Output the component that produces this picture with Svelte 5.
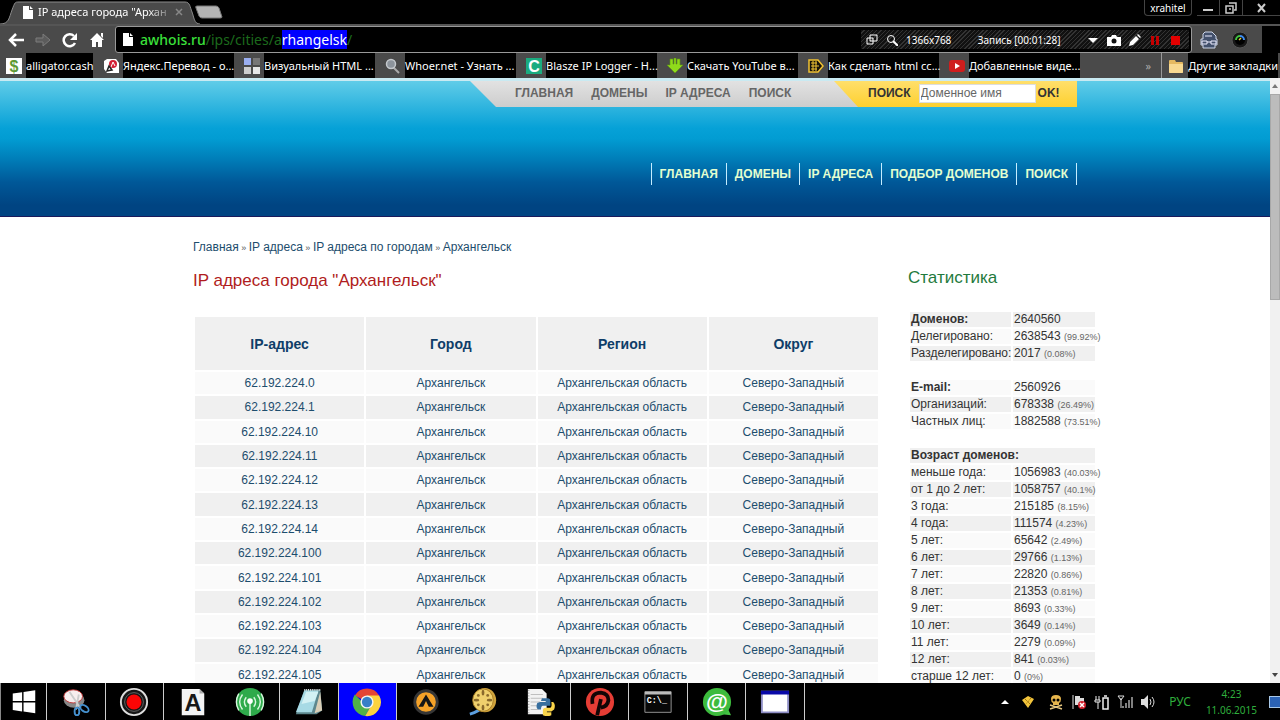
<script>
	let domain = $state('');

	const bookmarks = [
		{ icon: 'dollar', title: 'alligator.cash', short: true },
		{ icon: 'translate', title: 'Яндекс.Перевод - о...' },
		{ icon: 'grid', title: 'Визуальный HTML ...' },
		{ icon: 'lens', title: 'Whoer.net - Узнать ...' },
		{ icon: 'letter', title: 'Blasze IP Logger - H...' },
		{ icon: 'download', title: 'Скачать YouTube в...' },
		{ icon: 'tag', title: 'Как сделать html сс...' },
		{ icon: 'youtube', title: 'Добавленные виде...' }
	];

	const topLinks = ['ГЛАВНАЯ', 'ДОМЕНЫ', 'IP АДРЕСА', 'ПОИСК'];
	const mainLinks = ['ГЛАВНАЯ', 'ДОМЕНЫ', 'IP АДРЕСА', 'ПОДБОР ДОМЕНОВ', 'ПОИСК'];
	const crumbs = ['Главная', 'IP адреса', 'IP адреса по городам', 'Архангельск'];

	const hosts = [0, 1, 10, 11, 12, 13, 14, 100, 101, 102, 103, 104, 105];

	const stats = [
		{ label: 'Доменов:', value: '2640560', head: true, dark: true },
		{ label: 'Делегировано:', value: '2638543', share: '99.92%' },
		{ label: 'Разделегировано:', value: '2017', share: '0.08%', dark: true },
		{},
		{ label: 'E-mail:', value: '2560926', head: true },
		{ label: 'Организаций:', value: '678338', share: '26.49%', dark: true },
		{ label: 'Частных лиц:', value: '1882588', share: '73.51%' },
		{},
		{ label: 'Возраст доменов:', head: true, wide: true, dark: true },
		{ label: 'меньше года:', value: '1056983', share: '40.03%' },
		{ label: 'от 1 до 2 лет:', value: '1058757', share: '40.1%', dark: true },
		{ label: '3 года:', value: '215185', share: '8.15%' },
		{ label: '4 года:', value: '111574', share: '4.23%', dark: true },
		{ label: '5 лет:', value: '65642', share: '2.49%' },
		{ label: '6 лет:', value: '29766', share: '1.13%', dark: true },
		{ label: '7 лет:', value: '22820', share: '0.86%' },
		{ label: '8 лет:', value: '21353', share: '0.81%', dark: true },
		{ label: '9 лет:', value: '8693', share: '0.33%' },
		{ label: '10 лет:', value: '3649', share: '0.14%', dark: true },
		{ label: '11 лет:', value: '2279', share: '0.09%' },
		{ label: '12 лет:', value: '841', share: '0.03%', dark: true },
		{ label: 'старше 12 лет:', value: '0', share: '0%' }
	];
</script>

{#snippet pageIcon()}
	<svg class="page-icon" viewBox="0 0 10 13"><path d="M0 0h6v4h4v9H0z M7 0l3 3H7z" fill="#fff" /></svg>
{/snippet}

{#snippet bookmarkIcon(name)}
	<svg class="fav" viewBox="0 0 16 16">
		{#if name === 'dollar'}
			<path fill="#fff" d="M0 0h16v16H0z" />
			<text x="8" y="14" text-anchor="middle" font-family="Liberation Sans" font-weight="700" font-size="16" fill="#5d9a35">$</text>
		{:else if name === 'translate'}
			<path fill="#fff" d="M4 1h9l3 4v10H4L1 11V3z" />
			<circle cx="10" cy="6" r="4" fill="#d31f35" />
			<path d="M8 9l2-5 2 4" fill="none" stroke="#fff" />
			<path d="M4 13l2-5 3 4z" fill="none" stroke="#222" stroke-width="1.500" />
		{:else if name === 'grid'}
			<path fill="#9aaef0" d="M0 0h7v7H0z" />
			<path fill="#777" d="M9 0h7v7H9z" />
			<path fill="#ccc" d="M0 9h7v7H0z" />
			<path fill="#e6e6e6" d="M9 9h7v7H9z" />
		{:else if name === 'lens'}
			<path d="M8 9l6 6" stroke="#aaa" stroke-width="2" />
			<circle cx="6" cy="6" r="4.500" fill="#8c939b" stroke="#c4c8cc" stroke-width="1.500" />
		{:else if name === 'letter'}
			<path fill="#1aac80" d="M0 0h16v16H0z" />
			<text x="8" y="14" text-anchor="middle" font-family="Liberation Sans" font-weight="700" font-size="16" fill="#fff">C</text>
		{:else if name === 'download'}
			<path d="M3 1h3v5h1V0h2v6h1V1h3v6h3l-8 8-8-8h3z" fill="#8fdb1b" stroke="#5c9410" stroke-width=".6" />
		{:else if name === 'tag'}
			<path d="M1 2h9l5 6-5 6H1z" fill="#17120a" stroke="#f1c232" stroke-width="1.500" />
			<path d="M3 5h6M3 8h8M3 11h6M5 3v10M8 3v10" stroke="#f1c232" />
		{:else}
			<rect y="2" width="16" height="12" rx="3" fill="#cf1d1d" />
			<path d="M6 5l5 3-5 3z" fill="#fff" />
		{/if}
	</svg>
{/snippet}

<div class="screen">
	<header class="tabs">
		<div class="tab">
			<svg class="tab-shape" viewBox="0 0 200 24" preserveAspectRatio="none">
				<path d="M0 24C9 24 9 18 12 10S15 2 19 2H185C190 2 190 7 192 12S194 24 200 24" fill="#4a4a4a" stroke="#8a8a8a" />
			</svg>
			{@render pageIcon()}
			<span class="tab-title">IP адреса города "Архан</span>
			<button class="tab-close" aria-label="Закрыть">
				<svg viewBox="0 0 8 8"><path d="M1 1l6 6M7 1L1 7" stroke="#888" stroke-width="1.500" /></svg>
			</button>
		</div>
		<button class="new-tab" aria-label="Новая вкладка">
			<svg viewBox="0 0 30 14"><path d="M3 1h19q2 0 3 2l3 9q0 1-2 1H8q-2 0-3-2L2 3q-1-2 1-2z" fill="#b4b4b4" stroke="#777" /></svg>
		</button>
		<div class="window-buttons">
			<button class="user">xrahitel</button>
			<button aria-label="Свернуть"><svg viewBox="0 0 12 12"><path d="M1 7h10v2H1z" fill="#ccc" /></svg></button>
			<button aria-label="Развернуть"><svg viewBox="0 0 12 12"><path d="M4 1h7v7H9M1 4h7v7H1zM4 7h2" fill="none" stroke="#ccc" stroke-width="1.500" /></svg></button>
			<button class="close" aria-label="Закрыть окно"><svg viewBox="0 0 12 12"><path d="M2 2l7 8M9 2l-7 8" stroke="#ccc" stroke-width="2" /></svg></button>
		</div>
	</header>

	<div class="toolbar">
		<div class="nav-buttons">
			<button aria-label="Назад"><svg viewBox="0 0 16 16"><path d="M16 8H3M8 2L2 8l6 6" fill="none" stroke="#fff" stroke-width="2.500" /></svg></button>
			<button aria-label="Вперёд"><svg viewBox="0 0 16 16"><path d="M1 6h7V2l7 6-7 6v-4H1z" fill="#5c5c5c" stroke="#7c7c7c" /></svg></button>
			<button aria-label="Обновить"><svg viewBox="0 0 16 16"><path d="M13 11A6 6 0 1 1 12 4" fill="none" stroke="#fff" stroke-width="2.500" /><path d="M15 1v7H8z" fill="#fff" /></svg></button>
			<button aria-label="Домой"><svg viewBox="0 0 16 16"><path d="M8 1l7 7h-2v7H9v-5H7v5H3V8H1zM12 1h2v5l-2-2z" fill="#fff" /></svg></button>
		</div>
		<div class="omnibox">
			{@render pageIcon()}
			<span class="url"><b>awhois.ru</b>/ips/cities/a<mark>rhangelsk</mark>/</span>
			<div class="recorder">
				<svg viewBox="0 0 12 12"><path d="M4 1h7v6H4zM1 4h6v6H1z" fill="none" stroke="#fff" /></svg>
				<svg viewBox="0 0 12 12"><circle cx="5" cy="5" r="3.500" fill="none" stroke="#fff" /><path d="M7 7l5 5" stroke="#fff" stroke-width="2" /></svg>
				<span>1366x768</span>
				<span class="time">Запись [00:01:28]</span>
				<button aria-label="Меню"><svg viewBox="0 0 12 12"><path d="M1 4h10L6 9z" fill="#fff" /></svg></button>
				<button aria-label="Снимок"><svg class="camera" viewBox="0 0 14 12"><path d="M0 3h4l1-2h4l1 2h4v9H0z" fill="#fff" /><circle cx="7" cy="7" r="2.500" fill="#111" /></svg></button>
				<button aria-label="Рисовать"><svg viewBox="0 0 12 12"><path d="M1 8l6-6 3 3-6 6-4 1zM8 1l1-1 3 3-1 1z" fill="#fff" /></svg></button>
				<button aria-label="Пауза"><svg viewBox="0 0 12 12"><path d="M2 2h3v9H2zM7 2h3v9H7z" fill="#c40000" /></svg></button>
				<button aria-label="Стоп"><svg viewBox="0 0 12 12"><path d="M2 2h9v9H2z" fill="#e30000" /></svg></button>
			</div>
		</div>
		<div class="extensions">
			<svg viewBox="0 0 18 18"><path d="M5 1h7l4 4v3h1v6h-2v3H3v-3H1V8h2V3z" fill="#43516c" stroke="#cfd8ea" /><path d="M5 5h7M2 10h5v3H2zM11 10h5v3h-5zM7 11h4" fill="none" stroke="#eef" /></svg>
			<svg viewBox="0 0 18 18"><circle cx="9" cy="9" r="8" fill="#181818" stroke="#555" /><circle cx="9" cy="9" r="5" fill="#000" /><path d="M5 9a4 4 0 0 1 4-4" fill="none" stroke="#43c343" stroke-width="2" /><path d="M9 5a4 4 0 0 1 4 4" fill="none" stroke="#3d8df0" stroke-width="2" /><path d="M8 9l2-2" stroke="#e8cf3c" stroke-width="1.500" /></svg>
		</div>
	</div>

	<nav class="bookmarks">
		{#each bookmarks as mark}
			<a href="#bookmark" class:short={mark.short}>
				{@render bookmarkIcon(mark.icon)}
				<span>{mark.title}</span>
			</a>
		{/each}
		<span class="more">»</span>
		<a href="#other" class="other">
			<svg class="fav" viewBox="0 0 16 16"><path d="M1 3q0-1 1-1h5l1 2h6q1 0 1 1v9q0 1-1 1H2q-1 0-1-1z" fill="#e5b961" /><path d="M1 6h14v8q0 1-1 1H2q-1 0-1-1z" fill="#f8d991" /></svg>
			<span>Другие закладки</span>
		</a>
	</nav>

	<div class="viewport">
		<div class="site">
			<div class="site-header">
				<div class="wrap">
					<div class="top-bar">
						<nav class="top-links">
							{#each topLinks as link}<a href="#top">{link}</a>{/each}
						</nav>
						<form class="search">
							<label for="domain">ПОИСК</label>
							<input id="domain" type="text" placeholder="Доменное имя" bind:value={domain} />
							<button type="button">OK!</button>
						</form>
					</div>
					<nav class="main-links">
						{#each mainLinks as link}<a href="#main">{link}</a>{/each}
					</nav>
				</div>
			</div>

			<div class="wrap columns">
				<main>
					<nav class="crumbs">
						{#each crumbs as crumb, i}{#if i}<span>{' » '}</span>{/if}<a href="#crumb">{crumb}</a>{/each}
					</nav>
					<h1>IP адреса города "Архангельск"</h1>
					<table class="ips">
						<thead>
							<tr><th>IP-адрес</th><th>Город</th><th>Регион</th><th>Округ</th></tr>
						</thead>
						<tbody>
							{#each hosts as host}
								<tr>
									<td><a href="#ip">62.192.224.{host}</a></td>
									<td><a href="#city">Архангельск</a></td>
									<td><a href="#region">Архангельская область</a></td>
									<td><a href="#district">Северо-Западный</a></td>
								</tr>
							{/each}
						</tbody>
					</table>
				</main>
				<aside>
					<h2>Статистика</h2>
					<table class="stats">
						<colgroup><col class="name" /><col /></colgroup>
						<tbody>
							{#each stats as row}
								<tr class:dark={row.dark}>
									{#if row.wide}
										<th colspan="2">{row.label}</th>
									{:else if row.head}
										<th>{row.label}</th>
										<td>{row.value}</td>
									{:else if row.label}
										<td>{row.label}</td>
										<td>{row.value} <small>({row.share})</small></td>
									{/if}
								</tr>
							{/each}
						</tbody>
					</table>
				</aside>
			</div>
		</div>
		<div class="scrollbar">
			<svg viewBox="0 0 10 10"><path d="M2 7l3-4 3 4z" fill="#777" /></svg>
			<div class="thumb"></div>
			<svg viewBox="0 0 10 10"><path d="M2 3l3 4 3-4z" fill="#444" /></svg>
		</div>
	</div>

	<footer class="taskbar">
		<button class="start edge" aria-label="Пуск">
			<svg viewBox="0 0 32 32"><path d="M4 7l10-1.500V15H4zM15.500 5.300L28 3.500V15H15.500zM4 16.500h10V26L4 24.500zM15.500 16.500H28V28l-12.500-1.800z" fill="#fff" /></svg>
		</button>
		<div class="apps">
			<button class="edge" aria-label="Ножницы">
				<svg viewBox="0 0 32 32"><ellipse cx="14" cy="14" rx="11" ry="8" fill="#888" /><ellipse cx="13" cy="10" rx="10" ry="7" fill="#f7eeee" stroke="#c23434" /><path d="M9 5l12 18M19 8l-3 16" stroke="#ccc" stroke-width="2" /><ellipse cx="17" cy="26" rx="2.500" ry="4" fill="none" stroke="#4591cf" stroke-width="2" /><ellipse cx="25" cy="23" rx="5" ry="3" transform="rotate(35 25 23)" fill="none" stroke="#4591cf" stroke-width="2" /></svg>
			</button>
			<button class="edge" aria-label="Запись">
				<svg viewBox="0 0 32 32"><circle cx="16" cy="16" r="14" fill="#161616" stroke="#ddd" stroke-width="2" /><circle cx="16" cy="16" r="10" fill="none" stroke="#666" /><circle cx="16" cy="16" r="8" fill="#fa0505" /></svg>
			</button>
			<button aria-label="Шрифт">
				<svg viewBox="0 0 32 32"><path d="M4 2h19l5 5v23H4z" fill="#f3f3f3" /><path d="M23 2v5h5" fill="#aaa" /><text x="16" y="26" text-anchor="middle" font-family="Liberation Sans" font-weight="700" font-size="25" fill="#171717">A</text></svg>
			</button>
			<button class="edge" aria-label="Антенна">
				<svg viewBox="0 0 32 32"><circle cx="16" cy="16" r="15" fill="#2eaa4b" /><path d="M16 15v16M12 11q-4 5 0 10M8 8q-6 8 0 16M4 7q-5 9 0 18M20 11q4 5 0 10M24 8q6 8 0 16M28 7q5 9 0 18" fill="none" stroke="#d9f7df" stroke-width="1.500" /><circle cx="16" cy="15" r="3" fill="#fff" /></svg>
			</button>
			<button class="edge" aria-label="Блокнот">
				<svg viewBox="0 0 32 32"><path d="M11 3h17l2 22-6 4H2z" fill="#5d878d" /><path d="M11 4h15l-7 23H2z" fill="#a7dae5" /><path d="M13 5h13l-4 10-14 3z" fill="#d3f1f4" /><path d="M11 3h17" stroke="#eee" stroke-width="2" stroke-dasharray="1 1" /><path d="M28 5l2 20-8 3z" fill="#d9ceb7" /></svg>
			</button>
			<button class="edge active" aria-label="Chrome">
				<svg viewBox="0 0 32 32"><path d="M16 16L3 9a15 15 0 0 1 26 0z" fill="#e34536" /><path d="M16 16h-5L3 8a15 15 0 0 0 11 23l7-12z" fill="#50b148" /><path d="M16 9h13a15 15 0 0 1-15 22l7-12z" fill="#fcd33f" /><circle cx="16" cy="16" r="7" fill="#f5f5f5" /><circle cx="16" cy="16" r="5.500" fill="#377fc7" /></svg>
			</button>
			<button aria-label="AIMP">
				<svg viewBox="0 0 32 32"><circle cx="16" cy="16" r="12" fill="#f5a228" stroke="#363636" stroke-width="3" /><path d="M16 8l8 13h-5l-3-6-3 6H8z" fill="#161616" /></svg>
			</button>
			<button aria-label="Катушка">
				<svg viewBox="0 0 32 32"><path d="M2 29q10-3 15-9" stroke="#5c9fe0" stroke-width="3" fill="none" /><ellipse cx="18" cy="14" rx="12" ry="13" fill="#d0a33c" /><ellipse cx="16" cy="14" rx="11" ry="12" fill="#efd06d" stroke="#a67c24" /><g fill="#8a6a2c"><ellipse cx="16" cy="6" rx="1.500" ry="3" /><ellipse cx="16" cy="22" rx="1.500" ry="3" /><ellipse cx="9" cy="14" rx="3" ry="1.500" /><ellipse cx="23" cy="14" rx="3" ry="1.500" /><circle cx="11" cy="9" r="1.500" /><circle cx="21" cy="9" r="1.500" /><circle cx="11" cy="19" r="1.500" /><circle cx="21" cy="19" r="1.500" /></g></svg>
			</button>
			<button class="edge" aria-label="Python">
				<svg viewBox="0 0 32 32"><path d="M2 2h15l5 5v22H2z" fill="#f2f2f2" /><path d="M5 8h13M5 12h13M5 16h10M5 20h8M5 24h8" stroke="#bbb" /><path d="M3 3v25" stroke="#777" stroke-dasharray="1 2" /><path d="M17 12h6q3 0 3 3v5h-8q-2 0-2 4h-3q-3-2-1-7l3-1h6v-1h-5z" fill="#386f9f" /><path d="M27 16h2q3 3 1 8l-3 2h-5v1h5v3q-4 2-9 0v-5q0-3 3-3h5q2-1 1-6z" fill="#f9d44a" /></svg>
			</button>
			<button class="edge" aria-label="Плеер">
				<svg viewBox="0 0 32 32"><circle cx="16" cy="16" r="15" fill="#e63d35" /><path d="M8 18q-2-12 9-12 8 1 8 8-1 7-8 8M13 30l4-17" fill="none" stroke="#120505" stroke-width="4" /></svg>
			</button>
			<button class="edge" aria-label="Командная строка">
				<svg viewBox="0 0 32 32"><path d="M2 5h28v22H2z" fill="#080808" stroke="#999" /><path d="M2 5h28v3H2z" fill="#bbb" /><text x="4" y="17" font-family="Liberation Mono" font-weight="700" font-size="9" fill="#fff">C:\_</text></svg>
			</button>
			<button class="edge" aria-label="Агент">
				<svg viewBox="0 0 32 32"><path d="M27 22l4 8-10-1z" fill="#45c344" /><circle cx="16" cy="16" r="15" fill="#3dbb3d" /><text x="16" y="23" text-anchor="middle" font-family="Liberation Sans" font-weight="700" font-size="24" fill="#fff">@</text></svg>
			</button>
			<button class="edge" aria-label="Окно">
				<svg viewBox="0 0 32 32"><path d="M2 5h28v22H2z" fill="#fff" stroke="#8d8dc4" stroke-width="2" /><path d="M1 4h30v4H1z" fill="#0909a8" /></svg>
			</button>
		</div>
		<div class="tray">
			<svg viewBox="0 0 16 16"><path d="M4 10l4-4 4 4z" fill="#fff" /></svg>
			<svg class="pinned" viewBox="0 0 16 16"><path d="M2 6l6-4 6 3-6 9z" fill="#f3c53c" /><path d="M5 5l5 5M11 4L6 10" stroke="#805800" stroke-dasharray="1 1" /></svg>
			<svg viewBox="0 0 16 16"><path d="M3 5q0-4 5-4t5 4q0 3-2 4v2H5V9Q3 8 3 5z" fill="#e7b64d" /><circle cx="6" cy="6" r="1.500" /><circle cx="10" cy="6" r="1.500" /><path d="M2 11l12 4M14 11L2 15" stroke="#e7c880" stroke-width="1.500" /></svg>
			<svg viewBox="0 0 16 16"><path d="M2 1v14" stroke="#ddd" /><path d="M4 2h5v2h4v7H4z" fill="#ddd" /><circle cx="11" cy="11" r="4" fill="#d0202c" /><path d="M9 9l4 4M13 9l-4 4" stroke="#fff" stroke-width="1.500" /></svg>
			<svg viewBox="0 0 16 16"><path d="M9 4h5v11H9zM10 2h3" fill="none" stroke="#eee" stroke-width="1.500" /><path d="M2 2v4M5 2v4M1 6h5v2H1zM4 8v7" stroke="#eee" fill="none" /></svg>
			<svg viewBox="0 0 16 16"><path d="M1 2h6L4 6zM4 4v10" stroke="#ddd" fill="none" /><path d="M6 12v2M9 9v5M12 6v8M15 3v11" stroke="#aaa" stroke-width="1.500" /></svg>
			<svg viewBox="0 0 16 16"><path d="M1 5h3l4-4v14l-4-4H1z" fill="#ddd" /><path d="M10 5q2 3 0 6M12 3q4 5 0 10" fill="none" stroke="#ddd" /></svg>
			<span class="lang">РУС</span>
			<time><span>4:23</span><span>11.06.2015</span></time>
			<div class="peek"></div>
		</div>
	</footer>
</div>

<style>
	:global(body) {
		margin: 0;
		background: #000;
	}

	.screen {
		display: flex;
		flex-direction: column;
		height: 100vh;
		overflow: hidden;
		background: #000;
		color: #fff;
		font: 12px/16px 'Noto Sans', sans-serif;
	}

	a {
		color: inherit;
		text-decoration: none;
	}

	button {
		padding: 0;
		border: 0;
		background: none;
		color: inherit;
		font: inherit;
	}

	svg {
		display: block;
		flex: none;
	}

	.page-icon {
		width: 10px;
		height: 13px;
	}

	/* Вкладки */
	.tabs {
		display: flex;
		flex: none;
		height: 24px;
	}

	.tab {
		position: relative;
		display: flex;
		align-items: center;
		width: 200px;
		box-sizing: border-box;
		padding-left: 23px;
		font-size: 11px;
	}

	.tab-shape {
		position: absolute;
		inset: 0;
		width: 100%;
		height: 100%;
	}

	.tab > :not(.tab-shape) {
		position: relative;
	}

	.tab-title {
		width: 137px;
		margin-left: 5px;
		white-space: nowrap;
		mask-image: linear-gradient(to right, #000 80%, transparent);
	}

	.tab-close svg {
		width: 8px;
		height: 8px;
	}

	.new-tab {
		margin-left: -6px;
		align-self: center;
	}

	.new-tab svg {
		width: 30px;
		height: 14px;
	}

	.window-buttons {
		display: flex;
		height: 16px;
		margin-left: auto;
	}

	.window-buttons button {
		display: flex;
		align-items: center;
		justify-content: center;
		width: 23px;
		border: 1px solid #444;
		border-width: 0 1px 1px 0;
	}

	.window-buttons .user {
		width: 48px;
		margin-right: 5px;
		border-left-width: 1px;
		border-radius: 0 0 4px 4px;
		font-size: 10px;
	}

	.window-buttons .close {
		width: 37px;
		border-right: 0;
	}

	.window-buttons svg {
		width: 12px;
		height: 12px;
	}

	/* Адресная строка */
	.toolbar {
		display: flex;
		flex: none;
		height: 29px;
		box-sizing: border-box;
		padding-right: 18px;
		border-top: 2px solid #555;
		background: linear-gradient(to right, #4a4a4a calc(100% - 18px), #000 0);
	}

	.nav-buttons {
		display: flex;
		align-items: center;
		gap: 11px;
		padding: 0 10px 0 8px;
	}

	.nav-buttons svg {
		width: 16px;
		height: 16px;
	}

	.omnibox {
		display: flex;
		flex: 1;
		align-items: center;
		gap: 7px;
		box-sizing: border-box;
		padding: 0 2px 0 7px;
		border: 1px solid #999;
		border-radius: 3px;
		background: #000;
	}

	.url {
		color: #1c6a1c;
		font-size: 14px;
		line-height: 20px;
	}

	.url b {
		color: #3be03b;
		font-weight: 500;
	}

	.url mark {
		background: #00f;
		color: #fff;
	}

	.recorder {
		display: flex;
		align-items: center;
		gap: 8px;
		width: 328px;
		height: 19px;
		box-sizing: border-box;
		margin-left: auto;
		padding: 0 8px 0 5px;
		background: repeating-linear-gradient(135deg, #111 0 2px, #333 2px 3px);
		font-size: 10px;
	}

	.recorder svg {
		width: 12px;
		height: 12px;
	}

	.recorder .camera {
		width: 14px;
	}

	.recorder .time {
		margin: 0 auto;
	}

	.extensions {
		display: flex;
		align-items: center;
		gap: 13px;
		padding: 0 13px 0 8px;
	}

	.extensions svg {
		width: 18px;
		height: 18px;
	}

	/* Закладки */
	.bookmarks {
		display: flex;
		flex: none;
		align-items: center;
		gap: 10px;
		height: 25px;
		padding: 0 2px 0 6px;
		background: #4a4a4a;
		font-size: 11px;
	}

	.bookmarks a {
		display: flex;
		align-items: center;
		gap: 4px;
		height: 25px;
	}

	.bookmarks a span {
		width: 111px;
		background: #000;
		line-height: 25px;
		white-space: nowrap;
	}

	.bookmarks .short span {
		width: 67px;
	}

	.bookmarks .other {
		padding-left: 6px;
		border-left: 1px solid #999;
	}

	.bookmarks .other span {
		width: auto;
	}

	.fav {
		width: 16px;
		height: 16px;
	}

	.more {
		margin-left: auto;
		color: #aaa;
	}

	/* Страница */
	.viewport {
		display: flex;
		flex: 1;
		min-height: 0;
		background: #fff;
		font-family: 'Liberation Sans', Arial, sans-serif;
	}

	.site {
		flex: 1;
		min-width: 0;
		overflow: hidden;
	}

	.wrap {
		max-width: 884px;
		margin: 0 auto;
	}

	.site-header {
		height: 135px;
		border-top: 3px solid #c9eaf2;
		border-bottom: 1px solid #1a1a5c;
		background: linear-gradient(#60cce8, #06a1d7 35%, #029cd2 43%, #007db8 58%, #005898 75%, #004482 92%);
		font-weight: bold;
	}

	.top-bar {
		display: flex;
		width: 607px;
		height: 26px;
		margin-left: auto;
		background: linear-gradient(#e2e2e2, #cdcdcd);
		clip-path: polygon(0 0, 100% 0, 100% 100%, 26px 100%);
	}

	.top-links {
		display: flex;
		flex: 1;
		align-items: center;
		gap: 18px;
		padding: 0 0 2px 45px;
		color: #666;
	}

	.search {
		display: flex;
		align-items: center;
		width: 243px;
		box-sizing: border-box;
		padding: 0 0 2px 34px;
		background: linear-gradient(#ffdf6b, #fdd02f);
		clip-path: polygon(0 0, 100% 0, 100% 100%, 24px 100%);
		color: #333;
	}

	.search input {
		width: 117px;
		height: 19px;
		box-sizing: border-box;
		margin: 0 2px 0 8px;
		padding: 0 1px;
		border: 1px solid #ddd;
		background: #fff;
		font: 12px 'Liberation Sans', Arial, sans-serif;
	}

	.search input::placeholder {
		color: #666;
		opacity: 1;
	}

	.main-links {
		display: flex;
		justify-content: flex-end;
		margin-top: 56px;
		color: #e4ffd0;
		line-height: 22px;
	}

	.main-links a {
		padding: 0 8px;
		border-left: 1px solid #c5edff;
	}

	.main-links a:last-child {
		border-right: 1px solid #c5edff;
	}

	.columns {
		display: flex;
		justify-content: space-between;
	}

	main {
		width: 687px;
		padding-top: 22px;
		color: #14507a;
	}

	.crumbs {
		color: #555;
	}

	.crumbs span {
		font-size: 9px;
	}

	.crumbs a {
		color: #1d4d6d;
	}

	h1,
	h2 {
		margin: 0;
		font-size: 17px;
		font-weight: normal;
		line-height: 20px;
	}

	h1 {
		margin-top: 15px;
		color: #b01c20;
	}

	table {
		border-spacing: 2px;
	}

	.ips {
		width: 100%;
		height: 373px;
		margin-top: 24px;
		table-layout: fixed;
		text-align: center;
	}

	.ips th {
		height: 53px;
		padding: 0;
		background: #f0f0f0;
		color: #0e3d68;
		font-size: 14px;
	}

	.ips td {
		padding: 0;
		background: #fafafa;
		color: #1d4d6d;
	}

	.ips tbody tr:nth-child(even) td {
		background: #f0f0f0;
	}

	/* Статистика чуть выступает за сетку сайта */
	aside {
		width: 189px;
		margin-right: -20px;
		padding-top: 51px;
		color: #333;
	}

	h2 {
		color: #1f7a3d;
	}

	.stats {
		width: 100%;
		margin-top: 22px;
		table-layout: fixed;
		line-height: 15px;
	}

	.stats .name {
		width: 101px;
	}

	.stats tr {
		height: 15px;
	}

	.stats th,
	.stats td {
		padding: 0 0 0 1px;
		background: #fafafa;
		text-align: left;
		white-space: nowrap;
	}

	.stats .dark > * {
		background: #f0f0f0;
	}

	.stats small {
		color: #666;
		font-size: 9px;
		line-height: 9px;
	}

	.scrollbar {
		display: flex;
		flex-direction: column;
		width: 10px;
		background: #f1f1f1;
	}

	.scrollbar svg {
		width: 10px;
		height: 16px;
	}

	.scrollbar svg:last-child {
		margin-top: auto;
	}

	.thumb {
		height: 34%;
		box-sizing: border-box;
		border: 1px solid #a8a8a8;
		background: #bcbcbc;
	}

	/* Панель задач */
	.taskbar {
		display: flex;
		flex: none;
		height: 37px;
		background: #000;
	}

	.taskbar button {
		display: flex;
		align-items: center;
		justify-content: center;
		box-sizing: border-box;
	}

	.taskbar button svg {
		width: 30px;
		height: 30px;
	}

	.taskbar .start {
		width: 47px;
		border-left: 1px solid #888;
	}

	.taskbar .edge {
		border-right: 1px solid #ccc;
	}

	.taskbar .active {
		background: #00f;
	}

	.apps {
		display: flex;
		width: 758px;
	}

	.apps button {
		flex: 1;
	}

	.tray {
		display: flex;
		align-items: center;
		gap: 7px;
		margin-left: auto;
		color: #2fae3d;
	}

	.tray svg {
		width: 16px;
		height: 16px;
	}

	.tray .pinned {
		margin-right: 5px;
	}

	.lang {
		margin: 0 8px 0 6px;
	}

	time {
		display: flex;
		flex-direction: column;
		align-items: center;
		margin-right: 5px;
		font-size: 10px;
	}

	.peek {
		width: 10px;
		height: 10px;
		border: 1px solid #a9c8e8;
		border-right: 0;
		background: #2b62b4;
	}
</style>
